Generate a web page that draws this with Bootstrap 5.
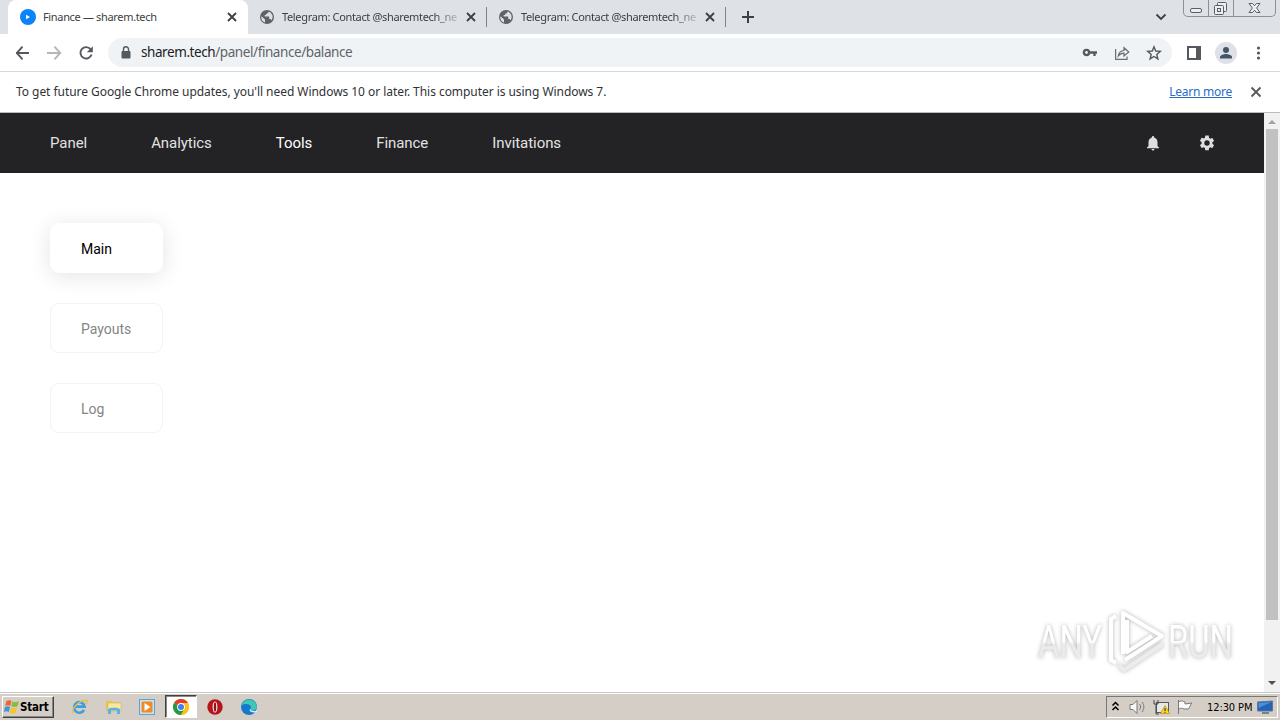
<!DOCTYPE html>
<html lang="en">
<head>
    <meta charset="UTF-8">
    <meta name="viewport" content="width=device-width, initial-scale=1.0">
    <title>Finance — sharem.tech</title>
    <link href="https://cdn.jsdelivr.net/npm/bootstrap@5.3.0/dist/css/bootstrap.min.css" rel="stylesheet">
    <style>
        body {
            width: 1280px;
            height: 720px;
            overflow: hidden;
            font-family: "Noto Sans", "Open Sans", sans-serif;
            color: #303236;
        }
        svg { display: block; flex-shrink: 0; }

        /* Browser tabs */
        .tab-strip { height: 34px; background: #dee1e6; padding-left: 8px; }
        .browser-tab { width: 239px; height: 34px; padding: 0 10px 0 12px; font-size: 11px; letter-spacing: -.34px; color: #3c4043; white-space: nowrap; }
        .browser-tab.current { width: 240px; background: #fff; border-radius: 8px 8px 0 0; }
        .tab-title { width: 177px; margin-left: 7px; line-height: 18px; }
        .tab-fade { -webkit-mask-image: linear-gradient(90deg, #000 152px, transparent 182px); mask-image: linear-gradient(90deg, #000 152px, transparent 182px); }
        .tab-divider { width: 1px; height: 20px; background: #808488; margin-left: -1px; }
        .window-buttons { width: 93px; height: 17px; border: 1px solid #8d9096; border-top: 0; border-radius: 0 0 5px 5px; }

        /* Address bar */
        .tool-row { height: 38px; border-bottom: 1px solid #d5d8dc; background: #fff; }
        .reload-icon { margin: 0 14px 0 -14px; }
        .address-bar { width: 1064px; height: 29px; flex-shrink: 0; border-radius: 15px; background: #f0f3f5; padding: 0 10px; font-size: 13.5px; letter-spacing: -.42px; color: #5f6368; }
        .address-bar .host { color: #202124; }
        .url-text { margin-left: 7px; }
        .panel-icon { margin-left: 15px; }
        .avatar { width: 22px; height: 22px; margin: 0 14px; background: #dee1e6; }

        .info-bar { height: 41px; padding: 0 16px; border-bottom: 1px solid #b9bbbd; font-size: 12px; letter-spacing: -.05px; background: #fff; }
        .info-bar a { color: #2b6cc4; letter-spacing: -.25px; }

        /* Page */
        .page-view { height: 579px; }
        .site-nav { height: 60px; padding: 0 48px 0 50px; background: #232225; border-bottom: 1px solid #1f1f20; font-family: Roboto, sans-serif; font-size: 15px; }
        .site-links { gap: 64px; padding-top: 2px; }
        .site-nav a { color: #e2e2e2; text-decoration: none; letter-spacing: -.06px; }
        .site-nav a.hovered { color: #fff; }
        .settings-icon { margin-left: 36px; }
        .side-menu { padding: 50px; gap: 30px; font-family: Roboto, sans-serif; font-size: 14px; }
        .side-item { width: 113px; height: 50px; padding: 2px 0 0 30px; border: 1px solid #f3f3f3; border-radius: 9px; color: #858585; text-decoration: none; }
        .side-item.chosen { color: #000; border-color: #fff; background: #fff; box-shadow: 0 3px 22px rgba(0, 0, 0, .11); }
        .scroll-track { width: 16px; background: #f1f1f1; }
        .scroll-thumb { width: 12px; height: 491px; background: #c1c1c1; }
        .watermark { right: 8px; bottom: 16px; filter: drop-shadow(0 0 2px rgba(0, 0, 0, .3)); pointer-events: none; }

        /* Taskbar */
        .task-bar { height: 28px; background: #d5cec6; border-top: 1px solid #c8c4bf; box-shadow: inset 0 1px 0 #fff; padding: 2px; color: #000; }
        .start-btn { width: 52px; height: 22px; margin-top: 1px; border: 1px solid; border-color: #fff #404040 #404040 #fff; box-shadow: inset -1px -1px 0 #888; font: bold 11.5px "DejaVu Sans Condensed", sans-serif; letter-spacing: -.2px; }
        .task-icons { margin-left: 8px; }
        .task-icon { width: 34px; height: 23px; }
        .task-icon.pressed { width: 32px; background: #fff; border: 1px solid; border-color: #404040 #fff #fff #404040; box-shadow: inset 1px 1px 0 #888; margin: 0 1px; }
        .tray { width: 172px; height: 22px; margin-top: 1px; border: 1px solid; border-color: #777 #fff #fff #777; font: 11px "DejaVu Sans Condensed", sans-serif; letter-spacing: -.1px; }
        .clock { margin-left: 3px; }
    </style>
</head>
<body>
<div class="tab-strip d-flex">
    <div class="browser-tab current d-flex align-items-center">
        <svg width="16" height="16" viewBox="0 0 16 16"><circle cx="8" cy="8" r="8" fill="#0a84f8"/><path d="M6 5.800 10 8 6 10.200z" fill="#fff"/></svg>
        <div class="tab-title">Finance — sharem.tech</div>
        <svg class="ms-auto" width="12" height="12" viewBox="0 0 12 12"><path d="M2 2l8 8M10 2l-8 8" stroke="#3c4043" stroke-width="1.8"/></svg>
    </div>
    <div class="browser-tab d-flex align-items-center">
        <svg width="14" height="14" viewBox="0 0 14 14"><circle cx="7" cy="7" r="7" fill="#5f6368"/><path d="M1.500 6.200 5 9.500v3.100A5.700 5.700 0 0 1 1.500 6.200zM8.500 1.500c0 1.600-.6 2-2.300 2.200V5H4.700v1.500h4.500V9h1.400l1 1.200A5.700 5.700 0 0 0 8.500 1.500z" fill="#dee1e6"/></svg>
        <div class="tab-title tab-fade ms-2">Telegram: Contact @sharemtech_ne</div>
        <svg class="ms-auto" width="12" height="12" viewBox="0 0 12 12"><path d="M2 2l8 8M10 2l-8 8" stroke="#3c4043" stroke-width="1.8"/></svg>
    </div>
    <div class="tab-divider align-self-center"></div>
    <div class="browser-tab d-flex align-items-center">
        <svg width="14" height="14" viewBox="0 0 14 14"><circle cx="7" cy="7" r="7" fill="#5f6368"/><path d="M1.500 6.200 5 9.500v3.100A5.700 5.700 0 0 1 1.500 6.200zM8.500 1.500c0 1.600-.6 2-2.300 2.200V5H4.700v1.500h4.500V9h1.400l1 1.200A5.700 5.700 0 0 0 8.500 1.500z" fill="#dee1e6"/></svg>
        <div class="tab-title tab-fade ms-2">Telegram: Contact @sharemtech_ne</div>
        <svg class="ms-auto" width="12" height="12" viewBox="0 0 12 12"><path d="M2 2l8 8M10 2l-8 8" stroke="#3c4043" stroke-width="1.8"/></svg>
    </div>
    <div class="tab-divider align-self-center"></div>
    <svg class="align-self-center ms-3" width="12" height="12" viewBox="0 0 12 12"><path d="M6 0v12M0 6h12" stroke="#3c4043" stroke-width="2"/></svg>
    <svg class="align-self-center ms-auto me-3" width="12" height="12" viewBox="0 0 12 12"><path d="M1.500 3.500 6 8l4.500-4.500" fill="none" stroke="#3c4043" stroke-width="1.800"/></svg>
    <div class="window-buttons d-flex me-1">
        <svg width="92" height="16" viewBox="0 0 92 16" fill="#eceef1" stroke="#5b5e64">
            <path d="M24.500 0v16M49.500 0v16" stroke="#8d9096"/>
            <rect x="6.500" y="8.500" width="11" height="4" rx="1.500"/>
            <rect x="33.500" y="2.500" width="9" height="9" rx="1"/><rect x="30.500" y="5.500" width="9" height="9" rx="1"/><rect x="33.500" y="8.500" width="3" height="3"/>
            <path d="M65 3.500h3.500l2 2.200 2-2.200H76L72.600 8l3.400 4.500h-3.500l-2-2.300-2 2.300H65L68.400 8z"/>
        </svg>
    </div>
</div>

<div class="tool-row d-flex align-items-center">
    <svg class="ms-3" width="76" height="16" viewBox="0 0 76 16" fill="none" stroke="#55585c" stroke-width="1.900">
        <path d="M13 8H0M6.500 1.700.8 8l5.700 6.300"/>
        <path d="M31 8h13M38.500 1.700 44.200 8l-5.700 6.300" stroke="#b4b6b9"/>
    </svg>
    <svg class="reload-icon" width="16" height="16" viewBox="0 0 16 16"><path d="M12.600 4.200A5.700 5.700 0 1 0 13.600 9.500" fill="none" stroke="#55585c" stroke-width="1.900"/><path d="M14.800 1.300v6H8.800z" fill="#55585c"/></svg>
    <div class="address-bar d-flex align-items-center">
        <svg width="16" height="16" viewBox="0 0 16 16"><rect x="3.500" y="6" width="9" height="7.500" rx="1" fill="#55585c"/><path d="M5.500 6.500V4.300a2.500 2.500 0 0 1 5 0v2.200" fill="none" stroke="#55585c" stroke-width="1.400"/></svg>
        <span class="url-text"><span class="host">sharem.tech</span>/panel/finance/balance</span>
        <svg class="ms-auto" width="16" height="16" viewBox="0 0 16 16"><circle cx="4.500" cy="7.500" r="2.600" fill="none" stroke="#55585c" stroke-width="2.400"/><path d="M7 7.500h8M12.500 7.500V11" stroke="#55585c" stroke-width="2.300"/></svg>
        <svg class="ms-3" width="16" height="16" viewBox="0 0 16 16" fill="none" stroke="#6a6d71" stroke-width="1.200"><path d="M1.600 4v10.400H13V11.500"/><path d="M4.300 11c.5-3.600 2.500-5.300 5.700-5.500V2.700L14.800 7 10 11V8.200C7.500 8.200 5.800 9 4.300 11z"/></svg>
        <svg class="ms-3" width="16" height="16" viewBox="0 0 16 16"><path d="M8 1.800l1.700 4.200 4.600.4-3.500 3 1.100 4.500L8 11.500l-3.900 2.400 1.100-4.500-3.500-3 4.600-.4z" fill="none" stroke="#55585c" stroke-width="1.400"/></svg>
    </div>
    <svg class="panel-icon" width="14" height="14" viewBox="0 0 14 14"><rect x="1" y="1" width="12" height="12" fill="none" stroke="#55585c" stroke-width="2"/><path d="M9 0h5v14H9z" fill="#55585c"/></svg>
    <div class="avatar rounded-circle d-flex align-items-center justify-content-center">
        <svg width="14" height="14" viewBox="0 0 14 14" fill="#45546b"><circle cx="7" cy="4" r="3"/><path d="M1 12.500V11c0-2 4-3 6-3s6 1 6 3v1.500z"/></svg>
    </div>
    <svg width="16" height="16" viewBox="0 0 16 16" fill="#55585c"><circle cx="7.500" cy="3" r="1.600"/><circle cx="7.500" cy="8" r="1.600"/><circle cx="7.500" cy="13" r="1.600"/></svg>
</div>

<div class="info-bar d-flex align-items-center">
    <span class="info-text">To get future Google Chrome updates, you'll need Windows 10 or later. This computer is using Windows 7.</span>
    <a href="#" class="ms-auto">Learn more</a>
    <svg class="ms-3" width="16" height="16" viewBox="0 0 16 16"><path d="M3.500 3.500l9 9M12.500 3.500l-9 9" stroke="#55585c" stroke-width="1.800"/></svg>
</div>

<div class="page-view d-flex position-relative">
    <div class="flex-grow-1">
        <nav class="site-nav d-flex align-items-center">
            <div class="d-flex site-links">
                <a href="#">Panel</a>
                <a href="#">Analytics</a>
                <a href="#" class="hovered">Tools</a>
                <a href="#">Finance</a>
                <a href="#">Invitations</a>
            </div>
            <svg class="ms-auto" width="18" height="18" viewBox="0 0 24 24" fill="#dedede"><path d="M12 22c1.100 0 2-.900 2-2h-4c0 1.100.900 2 2 2zm6-6v-5c0-3.100-1.600-5.600-4.500-6.300V4a1.500 1.500 0 0 0-3 0v.700C7.600 5.400 6 7.900 6 11v5l-2 2v1h16v-1z"/></svg>
            <svg class="settings-icon" width="18" height="18" viewBox="0 0 24 24" fill="#dedede"><path d="M19.140 12.940c.040-.300.060-.610.060-.940s-.020-.640-.070-.940l2.030-1.580a.49.49 0 0 0 .120-.610l-1.920-3.320a.49.49 0 0 0-.590-.220l-2.390.960a7 7 0 0 0-1.620-.940l-.360-2.540A.48.48 0 0 0 13.920 2h-3.840a.48.48 0 0 0-.470.410l-.360 2.540c-.590.240-1.130.570-1.620.940l-2.390-.960a.48.48 0 0 0-.590.220L2.740 8.870a.47.47 0 0 0 .120.610l2.030 1.580c-.050.300-.090.630-.090.940s.020.640.070.940l-2.030 1.580a.49.49 0 0 0-.120.610l1.920 3.320c.120.220.370.290.590.220l2.390-.960c.500.380 1.030.700 1.620.940l.360 2.540c.050.240.240.410.480.410h3.840c.240 0 .440-.170.470-.410l.360-2.540a7 7 0 0 0 1.620-.940l2.390.960c.220.080.470 0 .590-.220l1.920-3.320a.47.47 0 0 0-.120-.610zM12 15.600a3.600 3.600 0 1 1 0-7.200 3.600 3.600 0 0 1 0 7.200z"/></svg>
        </nav>
        <div class="side-menu d-flex flex-column">
            <a href="#" class="side-item chosen d-flex align-items-center">Main</a>
            <a href="#" class="side-item d-flex align-items-center">Payouts</a>
            <a href="#" class="side-item d-flex align-items-center">Log</a>
        </div>
    </div>
    <div class="scroll-track d-flex flex-column align-items-center">
        <svg width="16" height="16" viewBox="0 0 16 16"><path d="M4 11l4-4 4 4z" fill="#a3a3a3"/></svg>
        <div class="scroll-thumb"></div>
        <svg class="mt-auto" width="16" height="18" viewBox="0 0 16 18"><path d="M4 7h8l-4 4z" fill="#505050"/></svg>
    </div>
    <svg class="watermark position-absolute" width="240" height="72" viewBox="0 0 240 72">
        <defs>
            <linearGradient id="fade" x1="0" y1="0" x2="0" y2="1"><stop offset=".5" stop-color="#fff"/><stop offset=".55" stop-color="#ebebeb"/></linearGradient>
        </defs>
        <g font-family="Roboto, sans-serif" font-size="47" fill="url(#fade)">
            <text x="6" y="54" textLength="64" lengthAdjust="spacingAndGlyphs">ANY</text>
            <text x="136" y="54" textLength="65" lengthAdjust="spacingAndGlyphs">RUN</text>
        </g>
        <g fill="none" stroke="#fff" stroke-width="4" stroke-linejoin="round">
            <path d="M91 50V9l39 23-37 24"/>
            <path d="M95 16v32l25-16"/>
            <path d="M84 12l-5 3v41l5 3"/>
            <path d="M87 61l5 5 39-26" stroke="#ececec"/>
        </g>
    </svg>
</div>

<div class="task-bar d-flex">
    <div class="start-btn d-flex align-items-center">
        <svg width="17" height="16" viewBox="0 0 17 16"><path d="M3.500 2C5.500.8 7 1 8.500 2L7.300 7C5.800 6 4 6 2.200 7z" fill="#ee6530"/><path d="M9.500 2.500C11.500 3.500 13.500 3.500 16 2l-1.500 5.200c-2 1-4 1-6.200 0z" fill="#82bd41"/><path d="M2 8c2-1 3.500-1 5 0l-1.200 5c-1.500-1-3.300-1-5 0z" fill="#3f95d8"/><path d="M8 8.500c2 1 4 1 6.200 0L12.800 13.500c-2 1.200-4 1.200-6.200 0z" fill="#f9c32e"/></svg>
        <span class="start-text">Start</span>
    </div>
    <div class="d-flex task-icons">
        <div class="task-icon d-flex align-items-center justify-content-center">
            <svg width="17" height="16" viewBox="0 0 17 16" fill="none"><path d="M13 11a5.300 5.300 0 1 1 .6-3.400H4" stroke="#3b9fe0" stroke-width="2.600"/><path d="M2 14C-.5 11 9 0 15.500 1.500c1 .5.500 2-.5 3.500" stroke="#e9bc45" stroke-width="1.400"/></svg>
        </div>
        <div class="task-icon d-flex align-items-center justify-content-center">
            <svg width="17" height="16" viewBox="0 0 17 16"><path d="M1 3V1.500h5L7.500 3H14v9H1z" fill="#e3c366"/><path d="M3 4h13v8H3z" fill="#f7e7a0" stroke="#d3b15a" stroke-width=".6"/><path d="M3 15v-4.500C3 8 15 8 15 10.500V15h-3v-3.500H6V15z" fill="#5fb0e0"/></svg>
        </div>
        <div class="task-icon d-flex align-items-center justify-content-center">
            <svg width="16" height="16" viewBox="0 0 16 16"><rect x=".5" y=".5" width="15" height="15" fill="#c9e2f3" stroke="#5da3d5"/><rect x="2.500" y="2.500" width="11" height="11" rx="1.500" fill="#f18b21"/><path d="M5.500 4 11.500 8l-6 4z" fill="#fff"/></svg>
        </div>
        <div class="task-icon pressed d-flex align-items-center justify-content-center">
            <svg width="16" height="16" viewBox="0 0 16 16"><circle cx="8" cy="8" r="8" fill="#fbc116"/><path d="M8 8 1.070 4A8 8 0 0 1 14.930 4z" fill="#e33b2e"/><path d="M8 8 1.070 4A8 8 0 0 0 8 16l3.500-6z" fill="#249a46"/><path d="M8 4h6.900a8 8 0 0 1-6.900 12l3.500-6z" fill="#fbc116"/><circle cx="8" cy="8" r="3.900" fill="#fff"/><circle cx="8" cy="8" r="3" fill="#4080ea"/></svg>
        </div>
        <div class="task-icon d-flex align-items-center justify-content-center">
            <svg width="16" height="16" viewBox="0 0 16 16"><circle cx="8" cy="8" r="7.700" fill="#b5141b"/><ellipse cx="8" cy="8" rx="2.400" ry="5.500" fill="#fff"/><ellipse cx="8" cy="8" rx="1.300" ry="4.800" fill="#971017"/></svg>
        </div>
        <div class="task-icon d-flex align-items-center justify-content-center">
            <svg width="16" height="16" viewBox="0 0 16 16"><circle cx="8" cy="8" r="8" fill="#1779cd"/><path d="M.3 6.500A8 8 0 0 1 16 8c0 2.500-2 3.500-4 3.500-2.500 0-3-1-2-2.500C10.500 6 6 3 .3 6.500z" fill="#3fc6b5"/><path d="M9.500 9.500c-.8 2 2.500 3 5.500 2.300l1-1.500v3l-3 .2C9 13.500 7.500 11 9.500 9.500z" fill="#d5eafa"/></svg>
        </div>
    </div>
    <div class="tray d-flex align-items-center ms-auto">
        <svg width="97" height="20" viewBox="0 0 97 20">
            <path d="M5.500 8.500 8.500 5.500l3 3M5.500 13l3-3 3 3" fill="none" stroke="#000" stroke-width="1.500"/>
            <g fill="#f7f7f7" stroke="#77797b"><path d="M23 7.500h3l4-4v13l-4-4h-3z"/><path d="M32.500 7c1.500 2 1.500 4 0 6M35 5c2.500 3 2.500 7 0 10" fill="none"/></g>
            <rect x="49.500" y="5.500" width="12" height="10" fill="#e6e8ea" stroke="#55585c"/><path d="M47 3v4h4V3M49 7v10h3" fill="none" stroke="#444"/><path d="M58 8.500l4.500 8h-9z" fill="#ffd92e" stroke="#b98e00" stroke-width=".7"/><path d="M58 11v3M58 14.800v1" stroke="#222"/>
            <path d="M71.500 3v14M72 4.500c3-1.500 4 0 6 .500v2l7-1c-2 2-2 4-3.500 6H77c-2-1-3-1-5 0" fill="#fafafa" stroke="#77797b"/>
        </svg>
        <span class="clock text-nowrap">12:30 PM</span>
        <svg class="ms-auto me-1" width="16" height="14" viewBox="0 0 16 14"><path d="M.5 2l15-1v10H.5z" fill="#2463b5" stroke="#5d7894"/><path d="M1.500 3l13-1-13 6z" fill="#4c90d8"/><path d="M5 13h7" stroke="#56677a" stroke-width="1.500"/></svg>
    </div>
</div>
<script src="https://cdn.jsdelivr.net/npm/bootstrap@5.3.0/dist/js/bootstrap.bundle.min.js"></script>
</body>
</html>
